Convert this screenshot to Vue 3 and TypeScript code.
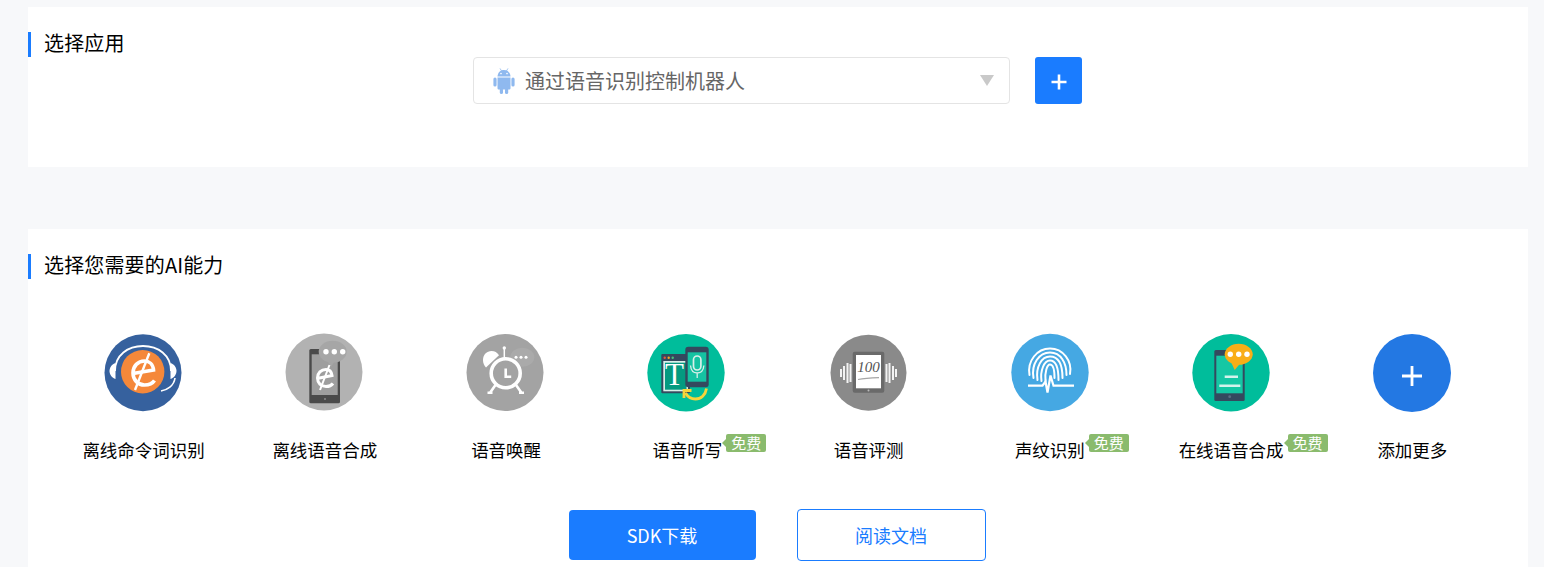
<script setup lang="ts">
const ringDots: number[] = [41, 49.3, 57.7]
</script>

<template>
  <div class="page">
    <section class="card app-card">
      <h2 class="title app-title">选择应用</h2>
      <div class="select">
        <svg class="android" viewBox="0 0 22 26" aria-hidden="true">
          <path d="M4.5 8.6C4.6 4.6 7.4 1.9 11 1.9s6.4 2.7 6.5 6.7z" />
          <path d="M4.5 9.6h13v10.6c0 .9-.6 1.4-1.4 1.4H5.900c-.8 0-1.400-.5-1.400-1.400z" />
          <rect x="0.4" y="9.4" width="3.2" height="9.2" rx="1.6" />
          <rect x="18.4" y="9.4" width="3.2" height="9.2" rx="1.6" />
          <rect x="6.8" y="20" width="3.2" height="6" rx="1.6" />
          <rect x="12" y="20" width="3.2" height="6" rx="1.6" />
          <path d="M7 .4l1.6 2.6M15 .4l-1.6 2.6" stroke="#8fb9ef" stroke-width=".8" />
          <circle cx="8" cy="5.6" r=".8" fill="#fff" />
          <circle cx="14" cy="5.6" r=".8" fill="#fff" />
        </svg>
        <span class="select-text">通过语音识别控制机器人</span>
        <span class="caret"></span>
      </div>
      <button class="add-btn" type="button" aria-label="添加">
        <svg viewBox="0 0 16 16" width="16" height="16"><path d="M8 .5v15M.5 8h15" stroke="#fff" stroke-width="2.600" /></svg>
      </button>
    </section>

    <section class="card ability-card">
      <h2 class="title">选择您需要的AI能力</h2>
      <div class="abilities">
        <div class="item">
          <svg class="icon" viewBox="1 0 78 78">
            <circle cx="39" cy="38.700" r="38.500" fill="#36619e" />
            <path d="M11 37C11 21 24 12 39 12s28 9 28 25" fill="none" stroke="#fff" stroke-width="1.800" />
            <path d="M11.500 29C8 30 5.500 33.500 5.500 37s2.500 7 6 8z" fill="#fff" />
            <path d="M66.500 29c3.500 1 6 4.500 6 8s-2.500 7-6 8z" fill="#fff" />
            <path d="M71 44c-1 8-8 12-14 13" fill="none" stroke="#fff" stroke-width="1.600" />
            <circle cx="38.700" cy="37.700" r="21.700" fill="#f5883a" />
            <path d="M29 39.500L49.500 36C49 30 45 27 40.500 27 34 27 29 32 29 39s5 12 11.500 12c4 0 8-1.500 10-4.500" fill="none" stroke="#fff" stroke-width="3.600" />
            <path d="M45.300 19.300L31 56" stroke="#fff" stroke-width="2.400" />
          </svg>
          <p class="label">离线命令词识别</p>
        </div>

        <div class="item">
          <svg class="icon" viewBox="1 0 78 78">
            <circle cx="39" cy="38" r="38.500" fill="#b2b2b2" />
            <rect x="24.300" y="15" width="30.700" height="54.300" rx="1.500" fill="#4a4a4a" />
            <rect x="26.700" y="20.300" width="26" height="40.700" fill="#9e9e9e" />
            <circle cx="40" cy="65" r="1" fill="#8a8a8a" />
            <path d="M42 26l4 7 3-5z" fill="#a6a6a6" />
            <ellipse cx="47.700" cy="17.700" rx="14" ry="11" fill="#a6a6a6" />
            <circle v-for="x in ringDots" :key="x" :cx="x" cy="17.700" r="2.700" fill="#fff" />
            <path d="M32 44.500L47 41.500C46.500 37.500 44 35.500 41 35.500 36 35.500 32.500 39 32.500 44s3.500 8.500 8.500 8.500c3 0 5.500-1 7-3" fill="none" stroke="#fff" stroke-width="3" />
            <path d="M44.500 31L35 56" stroke="#fff" stroke-width="2" />
          </svg>
          <p class="label">离线语音合成</p>
        </div>

        <div class="item">
          <svg class="icon" viewBox="1 0 78 78">
            <circle cx="39" cy="38.500" r="38.500" fill="#a3a3a3" />
            <ellipse cx="56.300" cy="23.300" rx="12" ry="9.500" fill="#aaa" />
            <path d="M17 26c0-5.500 3.800-9 8.500-9 3.200 0 5.800 1.500 7.500 4.200L20 33.500c-1.800-1.700-3-4.400-3-7.500z" fill="#fff" />
            <circle cx="39.700" cy="39.300" r="14.500" fill="none" stroke="#fff" stroke-width="3.600" />
            <path d="M39.700 34.500v8.200h5.500" fill="none" stroke="#fff" stroke-width="2.600" />
            <path d="M38.300 24v-9" stroke="#fff" stroke-width="1.500" />
            <circle cx="38.300" cy="14" r="1.700" fill="#fff" />
            <path d="M29.500 51l-5.500 7.700M50 51l5.500 7.700M21.500 58.700h5M53 58.700h5" stroke="#fff" stroke-width="2.600" />
            <circle cx="50" cy="23.300" r="1.500" fill="#fff" />
            <circle cx="55" cy="23.300" r="1.500" fill="#fff" />
            <circle cx="60" cy="23.300" r="1.500" fill="#fff" />
          </svg>
          <p class="label">语音唤醒</p>
        </div>

        <div class="item">
          <svg class="icon" viewBox="1 0 78 78">
            <circle cx="39" cy="38.700" r="38.700" fill="#00bd9b" />
            <rect x="14.300" y="20" width="28.700" height="39.300" rx="1" fill="#34495e" />
            <circle cx="17.700" cy="23.700" r="1.200" fill="#e8543f" />
            <circle cx="21.700" cy="23.700" r="1.200" fill="#f5a623" />
            <circle cx="25.700" cy="23.700" r="1.200" fill="#47c27a" />
            <rect x="16.300" y="27" width="24.700" height="30.300" fill="#d9efe9" />
            <rect x="18" y="28.700" width="21.500" height="27" fill="#049a80" />
            <text class="icon-t" x="27.500" y="51">T</text>
            <rect x="38.300" y="12.700" width="23.400" height="40.600" rx="3" fill="#34495e" />
            <rect x="40.700" y="18.300" width="18.600" height="29.400" fill="#15c2a2" />
            <rect x="46.500" y="22" width="7.400" height="14" rx="3.700" fill="none" stroke="#d9efe9" stroke-width="1.700" />
            <path d="M43.500 31.500c.5 5 3.500 7.500 6.700 7.500s6.200-2.500 6.700-7.500M50.200 39v5" fill="none" stroke="#d9efe9" stroke-width="1.300" />
            <path d="M59.500 54.500C58.500 61 54 65 48.500 65 44 65 40.500 62.500 38.500 59" fill="none" stroke="#f7d43a" stroke-width="2.800" />
            <path d="M37 64V56.500H44.500" fill="none" stroke="#f7d43a" stroke-width="2.800" />
          </svg>
          <p class="label">语音听写<span class="badge">免费</span></p>
        </div>

        <div class="item">
          <svg class="icon" viewBox="1 0 78 78">
            <circle cx="39.500" cy="38.700" r="38" fill="#8a8a8a" />
            <rect x="23.700" y="17.700" width="31.600" height="41" rx="2" fill="#6a6a6a" />
            <rect x="27" y="21" width="25" height="33.300" fill="#fff" />
            <circle cx="39.500" cy="56.500" r="1" fill="#bbb" />
            <text class="icon-score" x="39.500" y="38">100</text>
            <path d="M29 45.500c7-1.200 14-1.500 21-1.800" stroke="#a5a5a5" stroke-width="1.200" fill="none" />
            <path d="M12 35v8M15 32v14M18.500 29v20M21.500 30v18M57.500 30v18M60.500 29v20M64 32v14M67 35v8" stroke="#f2f2f2" stroke-width="2" />
          </svg>
          <p class="label">语音评测</p>
        </div>

        <div class="item">
          <svg class="icon" viewBox="0 0 78 78">
            <circle cx="39" cy="38.500" r="38.700" fill="#45a8e3" />
            <g fill="none" stroke="#fff" stroke-linecap="round" stroke-width="2">
              <path d="M18.500 41C16 27 26 14.500 39 14.500S61.500 27 59 40" />
              <path d="M22.500 44C20 30 28 18.500 39 18.500S55.500 29 55.500 41" />
              <path d="M26.500 46C24.500 33 30.500 22.500 39 22.500S51.500 31 51.500 44" />
              <path d="M30.500 47C29 37 33 26.500 39 26.500S47.500 34 47.500 46" />
              <path d="M34.500 47C33.500 39 36 30.500 39 30.500S43.500 36 43.500 44" />
            </g>
            <path d="M17 51.700H31.500L34.500 47.500 36.500 58.500 39.500 41.500 42.500 51.700H63" fill="none" stroke="#fff" stroke-width="2.200" />
          </svg>
          <p class="label">声纹识别<span class="badge">免费</span></p>
        </div>

        <div class="item">
          <svg class="icon" viewBox="0 0 78 78">
            <circle cx="39" cy="38.700" r="38.700" fill="#00bd9b" />
            <rect x="22.300" y="16" width="30.400" height="51" rx="1.500" fill="#34495e" />
            <rect x="24.300" y="21.700" width="26.400" height="37.600" fill="#15c7a4" />
            <circle cx="37.700" cy="62.700" r="1.400" fill="#596d82" />
            <path d="M32.700 42.700H46M27.300 51.700H48.300" stroke="#d5f3ec" stroke-width="2.400" />
            <path d="M39 28l3.700 8 5-6z" fill="#f9ae17" />
            <ellipse cx="46.700" cy="20.300" rx="14" ry="10.500" fill="#f9ae17" />
            <circle cx="38.300" cy="20.300" r="2.700" fill="#fff" />
            <circle cx="46.700" cy="20.300" r="2.700" fill="#fff" />
            <circle cx="55" cy="20.300" r="2.700" fill="#fff" />
          </svg>
          <p class="label">在线语音合成<span class="badge">免费</span></p>
        </div>

        <div class="item">
          <svg class="icon" viewBox="0 0 78 78">
            <circle cx="39" cy="39" r="39" fill="#2378e3" />
            <path d="M39 32v20M29 42h20" stroke="#fff" stroke-width="2.800" />
          </svg>
          <p class="label">添加更多</p>
        </div>
      </div>

      <div class="actions">
        <button class="btn primary" type="button">SDK下载</button>
        <button class="btn outline" type="button">阅读文档</button>
      </div>
    </section>
  </div>
</template>

<style>
html,
body {
  margin: 0;
  background: #f7f8fa;
  overflow: hidden;
}
</style>

<style scoped>
.page {
  height: 567px;
  overflow: hidden;
  padding: 7px 16px 0 28px;
  box-sizing: border-box;
  font-family: "Noto Sans CJK SC", "Noto Sans", sans-serif;
  color: #000;
}
.card {
  background: #fff;
}
.app-card {
  height: 160px;
  display: flex;
  align-items: flex-start;
}
.title {
  margin: 25px 0 0;
  border-left: 3px solid #1a7cff;
  padding-left: 13px;
  height: 25px;
  font-size: 20px;
  font-weight: 400;
  line-height: 21px;
  letter-spacing: 0.15px;
}
.app-title {
  width: 429px;
  flex: none;
}
.select {
  width: 537px;
  height: 47px;
  margin-top: 50px;
  box-sizing: border-box;
  border: 1px solid #e4e4e4;
  border-radius: 4px;
  display: flex;
  align-items: center;
  padding: 0 15px 0 19px;
}
.android {
  width: 22px;
  height: 26px;
  fill: #8fb9ef;
  flex: none;
}
.select-text {
  margin-left: 10px;
  font-size: 20px;
  line-height: 26px;
  color: #666;
  flex: 1;
}
.caret {
  width: 0;
  height: 0;
  border-left: 7px solid transparent;
  border-right: 7px solid transparent;
  border-top: 11px solid #c9c9c9;
}
.add-btn {
  width: 47px;
  height: 47px;
  margin: 50px 0 0 25px;
  padding: 2px 0 0;
  border: 0;
  border-radius: 3px;
  background: #1a7cff;
  display: flex;
  align-items: center;
  justify-content: center;
}
.ability-card {
  margin-top: 62px;
  overflow: hidden;
  padding-bottom: 40px;
}
.abilities {
  display: grid;
  grid-template-columns: repeat(8, 1fr);
  margin: 55px 25px 0;
}
.item {
  display: flex;
  flex-direction: column;
  align-items: center;
}
.icon {
  display: block;
  width: 78px;
  height: 78px;
  overflow: visible;
}
.icon-t {
  font-family: "Liberation Serif", serif;
  font-size: 31px;
  fill: #fff;
  text-anchor: middle;
}
.icon-score {
  font-family: "Liberation Serif", serif;
  font-size: 15px;
  font-style: italic;
  fill: #555;
  text-anchor: middle;
}
.label {
  position: relative;
  margin: 26px 0 0;
  font-size: 17.500px;
  line-height: 24px;
  white-space: nowrap;
}
.badge {
  position: absolute;
  left: calc(100% + 4px);
  top: -4px;
  width: 40px;
  height: 18px;
  border-radius: 2px;
  background: #8abb6d;
  color: #fff;
  font-size: 15px;
  line-height: 18px;
  text-align: center;
}
.badge::before {
  content: "";
  position: absolute;
  left: -4px;
  top: 5px;
  border-top: 4px solid transparent;
  border-bottom: 4px solid transparent;
  border-right: 4px solid #8abb6d;
}
.actions {
  display: flex;
  justify-content: center;
  align-items: center;
  gap: 41px;
  margin-top: 47px;
  padding-right: 2px;
}
.btn {
  font-family: inherit;
  font-size: 18px;
  border-radius: 4px;
  padding: 0;
}
.primary {
  width: 187px;
  height: 50px;
  border: 0;
  background: #1a7cff;
  color: #fff;
}
.outline {
  width: 189px;
  height: 52px;
  border: 1px solid #1a7cff;
  background: #fff;
  color: #1a7cff;
}
</style>
